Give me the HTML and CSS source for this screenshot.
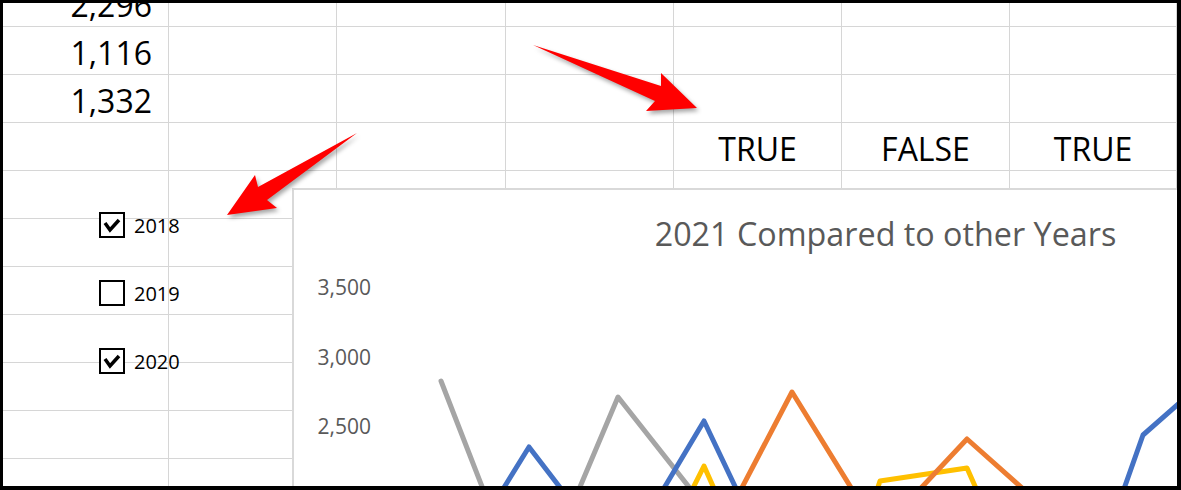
FILE: index.html
```html
<!DOCTYPE html>
<html lang="en">
  <head>
    <meta charset="UTF-8" />
    <title>Sales by Year</title>
    <link rel="stylesheet" href="styles.css">
  </head>
  <body>
    <div class="frame">
      <!-- sheet cells -->
      <div class="sheet">
        <div class="row"><div class="cell num">2,296</div><div class="cell"></div><div class="cell"></div><div class="cell"></div><div class="cell"></div><div class="cell"></div><div class="cell"></div></div>
        <div class="row"><div class="cell num">1,116</div><div class="cell"></div><div class="cell"></div><div class="cell"></div><div class="cell"></div><div class="cell"></div><div class="cell"></div></div>
        <div class="row"><div class="cell num">1,332</div><div class="cell"></div><div class="cell"></div><div class="cell"></div><div class="cell"></div><div class="cell"></div><div class="cell"></div></div>
        <div class="row"><div class="cell"></div><div class="cell"></div><div class="cell"></div><div class="cell"></div><div class="cell">TRUE</div><div class="cell">FALSE</div><div class="cell">TRUE</div></div>
        <div class="row"><div class="cell"></div><div class="cell"></div><div class="cell"></div><div class="cell"></div><div class="cell"></div><div class="cell"></div><div class="cell"></div></div>
        <div class="row"><div class="cell"></div><div class="cell"></div><div class="cell"></div><div class="cell"></div><div class="cell"></div><div class="cell"></div><div class="cell"></div></div>
        <div class="row"><div class="cell"></div><div class="cell"></div><div class="cell"></div><div class="cell"></div><div class="cell"></div><div class="cell"></div><div class="cell"></div></div>
        <div class="row"><div class="cell"></div><div class="cell"></div><div class="cell"></div><div class="cell"></div><div class="cell"></div><div class="cell"></div><div class="cell"></div></div>
        <div class="row"><div class="cell"></div><div class="cell"></div><div class="cell"></div><div class="cell"></div><div class="cell"></div><div class="cell"></div><div class="cell"></div></div>
        <div class="row"><div class="cell"></div><div class="cell"></div><div class="cell"></div><div class="cell"></div><div class="cell"></div><div class="cell"></div><div class="cell"></div></div>
        <div class="row"><div class="cell"></div><div class="cell"></div><div class="cell"></div><div class="cell"></div><div class="cell"></div><div class="cell"></div><div class="cell"></div></div>
      </div>

      <!-- year toggles -->
      <div class="checks">
        <label class="check">
          <span class="box"><svg viewBox="0 0 22 22" width="22" height="22"><polyline points="4,9 9,16 18,6" /></svg></span>2018
        </label>
        <label class="check">
          <span class="box"></span>2019
        </label>
        <label class="check">
          <span class="box"><svg viewBox="0 0 22 22" width="22" height="22"><polyline points="4,9 9,16 18,6" /></svg></span>2020
        </label>
      </div>

      <!-- chart -->
      <div class="chart">
        <div class="chart-title">2021 Compared to other Years</div>
        <div class="axis">
          <span>3,500</span>
          <span>3,000</span>
          <span>2,500</span>
        </div>
        <svg class="series" width="920" height="330" viewBox="294 190 920 330">
          <polyline class="gray" points="441,381 495,520 530,540 566,520 618,397 715,520 760,540" />
          <polyline class="yellow" points="660,560 677,520 704,466 728,520 760,560 850,600 867,520 880,481 967,468 990,520 1010,560" />
          <polyline class="orange" points="700,560 725,520 792,392 871,520 881,540 891,520 967,439 1058,520 1100,540" />
          <polyline class="blue" points="441,560 484,520 529,447 585,520 615,540 645,520 704,421 751,520 800,560 1100,560 1113,520 1143,435 1200,385" />
        </svg>
      </div>
    </div>

    <svg class="arrows" width="1181" height="490">
      <polygon points="533,45 661,86 661,73 697,108 646,111 655,101" />
      <polygon points="357,133 258,187 255,175 227,215 277,208 267,200" />
    </svg>
  </body>
</html>
```

FILE: styles.css
```css
body {
  margin: 0;
  position: relative;
  font-family: "Open Sans", "Noto Sans", sans-serif;
  background-color: white;
}

.frame {
  position: relative;
  width: 1181px;
  height: 490px;
  box-sizing: border-box;
  border-style: solid;
  border-color: #000;
  border-width: 3px 4px 4px 3px;
  overflow: hidden;
  background-color: white;
}

/* sheet is scrolled a little, so the first row is cut */
.sheet {
  margin-top: -24px;
}

.row {
  display: grid;
  grid-template-columns: 166px 168px 169px 168px 168px 168px 167px;
  height: 48px;
}

.cell {
  box-sizing: border-box;
  border-right: 1px solid #d6d6d6;
  border-bottom: 1px solid #d6d6d6;
  display: flex;
  align-items: flex-end;
  justify-content: center;
  font-size: 32px;
  color: #000;
  white-space: nowrap;
}

.cell.num {
  justify-content: flex-end;
  padding-right: 16px;
}

.checks {
  position: absolute;
  left: 96px;
  top: 209px;
  display: flex;
  flex-direction: column;
  gap: 42px;
}

.check {
  display: flex;
  align-items: flex-start;
  gap: 9px;
  height: 26px;
  font-size: 20px;
  color: #000;
}

.box {
  width: 26px;
  height: 26px;
  box-sizing: border-box;
  border: 2px solid #000;
  background-color: white;
}

.box svg {
  display: block;
}

.box polyline {
  fill: none;
  stroke: #000;
  stroke-width: 3.5;
}

.chart {
  position: absolute;
  left: 289px;
  top: 185px;
  width: 1187px;
  height: 420px;
  box-sizing: border-box;
  border: 2px solid #d9d9d9;
  background-color: white;
  color: #595959;
}

.chart-title {
  padding-top: 21px;
  font-size: 32.3px;
  line-height: 44px;
  text-align: center;
}

.axis {
  width: 77px;
  padding-top: 18px;
  display: flex;
  flex-direction: column;
  gap: 41.5px;
  text-align: right;
  font-size: 21px;
  line-height: 28px;
}

.series {
  position: absolute;
  left: 0;
  top: 0;
}

.series polyline {
  fill: none;
  stroke-width: 5;
  stroke-linejoin: round;
  stroke-linecap: round;
}

.series .gray { stroke: #a5a5a5; }
.series .yellow { stroke: #ffc000; }
.series .orange { stroke: #ed7d31; }
.series .blue { stroke: #4472c4; }

.arrows {
  position: absolute;
  top: 0;
  left: 0;
  pointer-events: none;
}

.arrows polygon {
  fill: #ff0000;
  filter: drop-shadow(2px 3px 2px rgba(0, 0, 0, 0.35));
}
```
